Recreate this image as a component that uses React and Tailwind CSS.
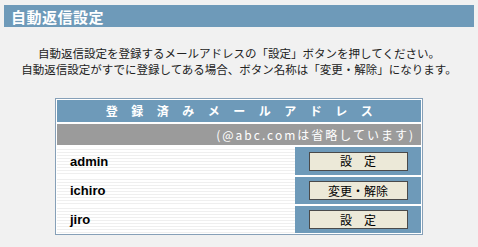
export default function App() {
  const jp = { fontFamily: '"Noto Sans CJK JP", "Noto Sans", sans-serif' };
  const rows = [
    { name: "admin", label: "設　定" },
    { name: "ichiro", label: "変更・解除" },
    { name: "jiro", label: "設　定" },
  ];
  return (
    <div className="w-[478px] h-[247px] bg-[#f1f1f1] pt-[5px] overflow-hidden" style={jp}>
      <div className="ml-[4px] w-[470px] h-[22px] bg-[#6e9ab9] flex items-center pl-[7px]">
        <span className="text-white text-[15px] font-bold leading-none tracking-[0.5px]">自動返信設定</span>
      </div>
      <div className="mt-[18px] text-center text-[11.5px] leading-[16px] text-[#222]">
        <div>自動返信設定を登録するメールアドレスの「設定」ボタンを押してください。</div>
        <div>自動返信設定がすでに登録してある場合、ボタン名称は「変更・解除」になります。</div>
      </div>
      <div className="mt-[21px] ml-[55px] w-[368px] border border-[#86a0b8] bg-white p-[1px] flex flex-col gap-[2px]">
        <div className="h-[22px] bg-[#6e9ab9] flex items-center justify-center pl-[14px]">
          <span className="text-white text-[12px] font-bold tracking-[13.5px] leading-none">登録済みメールアドレス</span>
        </div>
        <div className="h-[21px] bg-[#9b9b9b] flex items-center justify-end pr-[6px]">
          <span className="text-white text-[12px] tracking-[2px] leading-none">(@abc.comは省略しています)</span>
        </div>
        {rows.map((r, i) => (
          <div key={r.name} className={`flex ${i === 0 ? "h-[28px]" : "h-[27px]"}`}>
            <div className="w-[238px] flex items-center pl-[13px] bg-[repeating-linear-gradient(to_bottom,#ffffff_0px,#ffffff_2px,#efefef_2px,#efefef_3px)]">
              <span className="text-[13px] font-bold text-black leading-none" style={{ fontFamily: '"Liberation Sans", Arial, sans-serif' }}>{r.name}</span>
            </div>
            <div className="flex-1 bg-[#6e9ab9] flex items-center justify-center">
              <div className="w-[99px] h-[19px] border border-[#4a4a4a] bg-[#ece9d8] flex items-center justify-center">
                <span className="text-[12px] text-black leading-none">{r.label}</span>
              </div>
            </div>
          </div>
        ))}
      </div>
    </div>
  );
}
